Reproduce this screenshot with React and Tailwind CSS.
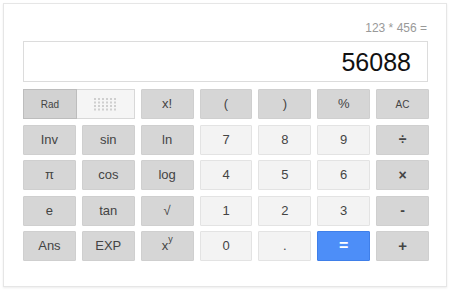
import React from "react";

const sci = "bg-[#d6d6d6] border border-[#cfcfcf] text-[#444]";
const num = "bg-[#f3f3f3] border border-[#e3e3e3] text-[#444]";

function Btn({ cls, children, textCls = "text-[13px]" }) {
  return (
    <div className={`flex items-center justify-center rounded-[1px] ${cls} ${textCls}`}>
      {children}
    </div>
  );
}

function Dots() {
  const dots = [];
  for (let r = 0; r < 4; r++) {
    for (let c = 0; c < 6; c++) {
      dots.push(<rect key={`${r}-${c}`} x={c * 4} y={r * 3.5} width="2" height="2" fill="#cfcfcf" />);
    }
  }
  return (
    <svg width="22" height="13" viewBox="0 0 22 13">
      {dots}
    </svg>
  );
}

export default function App() {
  return (
    <div className="w-[450px] h-[290px] bg-white p-[3px] pb-[3px]" style={{ fontFamily: "Arial, 'Liberation Sans', sans-serif" }}>
      <div className="w-[444px] h-[284px] border border-[#e6e6e6] shadow-[0_1px_2px_rgba(0,0,0,0.08)] bg-white pl-[19px] pt-[14px]">
        <div className="w-[405px] flex justify-end text-[12px] leading-[14px] text-[#999] pr-[1px] h-[23px] pt-[3px]">
          123 * 456 =
        </div>
        <div className="w-[405px] h-[41px] border border-[#dcdcdc] bg-white flex items-center justify-end pr-[16px] text-[25px] text-[#111] leading-none pt-[1px]">
          56088
        </div>
        <div className="mt-[7px] w-[406px] grid grid-cols-7 gap-x-[6px] gap-y-[5.5px] auto-rows-[30px]">
          <div className="col-span-2 flex">
            <div className="w-[54px] flex items-center justify-center bg-[#d2d2d2] border border-[#bdbdbd] text-[10px] text-[#444]">Rad</div>
            <div className="flex-1 flex items-center justify-center bg-[#f5f5f5] border border-[#d8d8d8] border-l-0">
              <Dots />
            </div>
          </div>
          <Btn cls={sci}>x!</Btn>
          <Btn cls={sci}>(</Btn>
          <Btn cls={sci}>)</Btn>
          <Btn cls={sci}>%</Btn>
          <Btn cls={sci} textCls="text-[10px]">AC</Btn>

          <Btn cls={sci}>Inv</Btn>
          <Btn cls={sci}>sin</Btn>
          <Btn cls={sci}>ln</Btn>
          <Btn cls={num}>7</Btn>
          <Btn cls={num}>8</Btn>
          <Btn cls={num}>9</Btn>
          <Btn cls={sci} textCls="text-[14px] font-bold">÷</Btn>

          <Btn cls={sci}>π</Btn>
          <Btn cls={sci}>cos</Btn>
          <Btn cls={sci}>log</Btn>
          <Btn cls={num}>4</Btn>
          <Btn cls={num}>5</Btn>
          <Btn cls={num}>6</Btn>
          <Btn cls={sci} textCls="text-[14px] font-bold">×</Btn>

          <Btn cls={sci}>e</Btn>
          <Btn cls={sci}>tan</Btn>
          <Btn cls={sci}>√</Btn>
          <Btn cls={num}>1</Btn>
          <Btn cls={num}>2</Btn>
          <Btn cls={num}>3</Btn>
          <Btn cls={sci} textCls="text-[14px] font-bold">-</Btn>

          <Btn cls={sci}>Ans</Btn>
          <Btn cls={sci}>EXP</Btn>
          <Btn cls={sci}>
            <span className="flex items-start">x<span className="text-[9px] leading-none -mt-[1px]">y</span></span>
          </Btn>
          <Btn cls={num}>0</Btn>
          <Btn cls={num}>.</Btn>
          <Btn cls="bg-[#4d8ef8] border border-[#3f7fe9] text-white" textCls="text-[16px] font-bold">=</Btn>
          <Btn cls={sci} textCls="text-[15px] font-bold">+</Btn>
        </div>
      </div>
    </div>
  );
}
